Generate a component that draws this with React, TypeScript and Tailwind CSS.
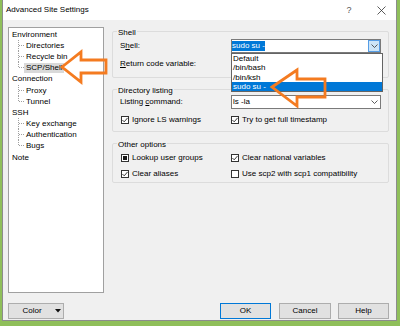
import React from 'react'

type CheckState = 'on' | 'off' | 'mixed'

const tree = [
	{ label: 'Environment', children: ['Directories', 'Recycle bin', 'SCP/Shell'] },
	{ label: 'Connection', children: ['Proxy', 'Tunnel'] },
	{ label: 'SSH', children: ['Key exchange', 'Authentication', 'Bugs'] },
	{ label: 'Note', children: [] as string[] }
]

const shells = ['Default', '/bin/bash', '/bin/ksh', 'sudo su -']

function Connector({ last }: { last: boolean }) {
	return (
		<svg width="12" height="12" className="shrink-0 overflow-visible">
			<line x1="6.5" y1="0" x2="6.5" y2={last ? 6 : 12} stroke="#a0a0a0" strokeDasharray="1 1" />
			<line x1="7" y1="5.5" x2="12" y2="5.5" stroke="#a0a0a0" strokeDasharray="1 1" />
		</svg>
	)
}

function Chevron() {
	return (
		<svg width="7" height="4" viewBox="0 0 7 4">
			<path d="M0.5 0.5 L3.5 3.5 L6.5 0.5" fill="none" stroke="#333" strokeWidth="0.8" />
		</svg>
	)
}

function Check({ state }: { state: CheckState }) {
	return (
		<span className="flex h-[8px] w-[8px] shrink-0 items-center justify-center border border-[#333] bg-white">
			{state === 'on' && (
				<svg width="6" height="6" viewBox="0 0 6 6">
					<path d="M0.4 3 L2.2 4.8 L5.6 0.9" fill="none" stroke="#222" strokeWidth="0.9" />
				</svg>
			)}
			{state === 'mixed' && <span className="h-[4px] w-[4px] bg-[#1a1a1a]" />}
		</span>
	)
}

function CheckItem({ state, label, className = '' }: { state: CheckState; label: string; className?: string }) {
	return (
		<div className={`flex items-center gap-[3px] ${className}`}>
			<Check state={state} />
			<span className="leading-[10px]">{label}</span>
		</div>
	)
}

function Group({ title, className = '', children }: { title: string; className?: string; children: React.ReactNode }) {
	return (
		<fieldset className={`w-[277px] rounded-[2px] border border-[#dcdcdc] px-[7px] ${className}`}>
			<legend className="-ml-[3px] px-[1px] pt-[4px] leading-[8px]">{title}</legend>
			{children}
		</fieldset>
	)
}

function Button({ children, className = '' }: { children: React.ReactNode; className?: string }) {
	return (
		<button className={`flex h-[16px] items-center justify-center border bg-[#e1e1e1] leading-[10px] ${className}`}>
			{children}
		</button>
	)
}

export default function App() {
	return (
		<div className="relative flex h-[326px] w-[400px] flex-col overflow-hidden bg-[#8fbf5a] pb-[5px] pl-[2px] pr-[3px] font-['Liberation_Sans',Arial,sans-serif] text-[8px] text-black">
			<div className="flex flex-1 flex-col border-x border-b border-[#8c8c8c] bg-[#f0f0f0]">
				{/* title bar */}
				<div className="flex h-[20px] items-center bg-white pl-[3px]">
					<span className="leading-[10px]">Advanced Site Settings</span>
					<div className="ml-auto flex h-full items-center gap-[2px]">
						<span className="flex w-[30px] justify-center text-[9px] leading-[10px] text-[#555]">?</span>
						<span className="flex w-[30px] justify-center">
							<svg width="9" height="9" viewBox="0 0 9 9">
								<path d="M0.5 0.5 L8.5 8.5 M8.5 0.5 L0.5 8.5" stroke="#333" strokeWidth="0.8" />
							</svg>
						</span>
					</div>
				</div>

				{/* body */}
				<div className="flex h-[300px] flex-col pl-[5px] pr-[7px] pt-[5px]">
					<div className="flex gap-[8px]">
						<div className="mt-[2px] h-[266px] w-[96px] border border-[#a0a0a0] bg-white pt-[1px]">
							{tree.map((node) => (
								<div key={node.label}>
									<div className="flex h-[11.2px] items-center pl-[3px] leading-[10px]">{node.label}</div>
									{node.children.map((child, i) => (
										<div key={child} className="flex h-[11.2px] items-center pl-[3px]">
											<Connector last={i === node.children.length - 1} />
											<span
												className={`px-[2px] leading-[10px] ${child === 'SCP/Shell' ? 'bg-[#d9d9d9]' : ''}`}
											>
												{child}
											</span>
										</div>
									))}
								</div>
							))}
						</div>

						<div className="flex flex-col">
							<Group title="Shell" className="pb-[6px]">
								<div className="mt-[2px] flex h-[14px] items-center">
									<span className="w-[111px] leading-[10px]">
										S<u>h</u>ell:
									</span>
									<div className="relative flex h-[14px] w-[150px] items-center border border-[#7a7a7a] bg-white">
										<span className="bg-[#0078d7] leading-[10px] text-white">sudo su -</span>
										<span className="ml-auto flex h-full w-[12px] items-center justify-center border border-[#569de5] bg-[#cce4f7]">
											<Chevron />
										</span>
										<div className="absolute left-[-1px] top-[13px] z-10 w-[152px] border border-[#646464] bg-white">
											{shells.map((s) => (
												<div
													key={s}
													className={`flex h-[9.25px] items-center pl-[1px] leading-[9px] ${
														s === 'sudo su -' ? 'bg-[#0078d7] text-white' : ''
													}`}
												>
													{s}
												</div>
											))}
										</div>
									</div>
								</div>
								<div className="mt-[4px] flex h-[14px] items-center leading-[10px]">
									<span>
										<u>R</u>eturn code variable:
									</span>
								</div>
							</Group>

							<Group title="Directory listing" className="mt-[5px] pb-[5px]">
								<div className="flex h-[14px] items-center">
									<span className="w-[111px] leading-[10px]">
										Listing <u>c</u>ommand:
									</span>
									<div className="flex h-[14px] w-[150px] items-center border border-[#7a7a7a] bg-white">
										<span className="pl-[1px] leading-[10px]">ls -la</span>
										<span className="ml-auto flex w-[12px] justify-center">
											<Chevron />
										</span>
									</div>
								</div>
								<div className="mt-[5px] flex h-[12px] items-center pl-[1px]">
									<CheckItem state="on" label="Ignore LS warnings" className="w-[110px]" />
									<CheckItem state="on" label="Try to get full timestamp" />
								</div>
							</Group>

							<Group title="Other options" className="mt-[5px] pb-[2px]">
								<div className="mt-[3px] flex h-[12px] items-center pl-[1px]">
									<CheckItem state="mixed" label="Lookup user groups" className="w-[110px]" />
									<CheckItem state="on" label="Clear national variables" />
								</div>
								<div className="mt-[4px] flex h-[12px] items-center pl-[1px]">
									<CheckItem state="on" label="Clear aliases" className="w-[110px]" />
									<CheckItem state="off" label="Use scp2 with scp1 compatibility" />
								</div>
							</Group>
						</div>
					</div>

					<div className="mt-[10px] flex h-[16px]">
						<Button className="w-[56px] justify-start border-[#adadad]">
							<span className="w-[46px] text-center">Color</span>
							<svg width="6" height="4" viewBox="0 0 6 4">
								<path d="M0 0 L6 0 L3 3.5 Z" fill="#111" />
							</svg>
						</Button>
						<Button className="ml-auto w-[51px] border-[#0078d7]">OK</Button>
						<Button className="ml-[8px] w-[52px] border-[#adadad]">Cancel</Button>
						<Button className="ml-[7px] w-[51px] border-[#adadad]">Help</Button>
					</div>
				</div>
			</div>

			{/* callout arrows */}
			<svg className="pointer-events-none absolute left-0 top-0 z-20" width="400" height="326">
				<polygon
					points="62,67 81,52 81,60 106,60 106,73 81,73 81,82"
					fill="none"
					stroke="#f47b20"
					strokeWidth="2.8"
					strokeLinejoin="miter"
				/>
				<polygon
					points="272,87 297,70 297,79 325,79 325,97 297,97 297,106"
					fill="none"
					stroke="#f47b20"
					strokeWidth="2.8"
					strokeLinejoin="miter"
				/>
			</svg>
		</div>
	)
}
